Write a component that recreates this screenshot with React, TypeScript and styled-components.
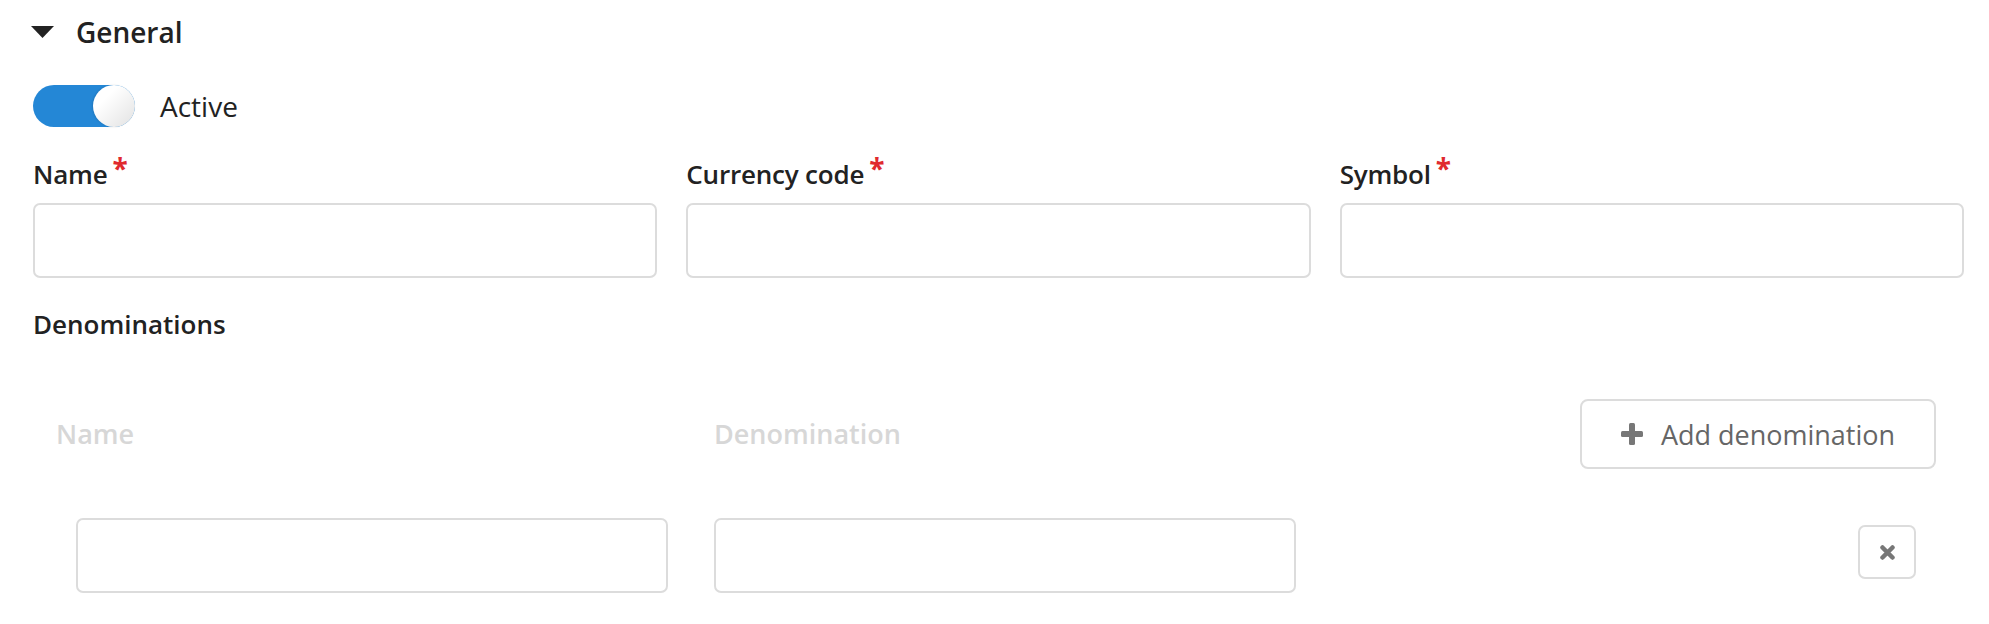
import React from "react";
import styled, { createGlobalStyle } from "styled-components";

const GlobalStyle = createGlobalStyle`
  body {
    margin: 0;
    background: #ffffff;
    font-family: "Open Sans", "Liberation Sans", sans-serif;
    color: #222222;
  }
`;

export default function App() {
  return (
    <>
      <GlobalStyle />
      <Page>
        <SectionHeader>
          <svg width="23" height="12" viewBox="0 0 23 12">
            <path d="M0 0 H23 L11.5 12 Z" fill="#222" />
          </svg>
          <span>General</span>
        </SectionHeader>

        <ToggleRow>
          <Switch $on>
            <Knob />
          </Switch>
          <span>Active</span>
        </ToggleRow>

        <FieldGrid>
          <Field>
            <Label>
              Name<Required>*</Required>
            </Label>
            <Input />
          </Field>
          <Field>
            <Label>
              Currency code<Required>*</Required>
            </Label>
            <Input />
          </Field>
          <Field>
            <Label>
              Symbol<Required>*</Required>
            </Label>
            <Input />
          </Field>
        </FieldGrid>

        <SubHeading>Denominations</SubHeading>

        <DenomTable>
          <HeadCell>Name</HeadCell>
          <HeadCell>Denomination</HeadCell>
          <AddButton>
            <svg width="22" height="22" viewBox="0 0 22 22">
              <rect x="8" y="0" width="6" height="22" rx="1.5" fill="#777" />
              <rect x="0" y="8" width="22" height="6" rx="1.5" fill="#777" />
            </svg>
            Add denomination
          </AddButton>

          <BodyCell $left={32} $right={34}>
            <Input />
          </BodyCell>
          <BodyCell $left={12} $right={14}>
            <Input />
          </BodyCell>
          <RemoveButton>
            <svg width="15" height="15" viewBox="0 0 15 15">
              <path
                d="M2.5 2.5 L12.5 12.5 M12.5 2.5 L2.5 12.5"
                stroke="#777"
                strokeWidth="4.5"
                strokeLinecap="round"
              />
            </svg>
          </RemoveButton>
        </DenomTable>
      </Page>
    </>
  );
}

const Page = styled.div`
  padding: 14px 25px 0 33px;
`;

const SectionHeader = styled.div`
  display: flex;
  align-items: center;
  gap: 22px;
  margin-left: -2px;
  font-size: 28px;
  line-height: 36px;
  font-weight: 600;
  color: #222;
`;

const ToggleRow = styled.div`
  display: flex;
  align-items: center;
  gap: 25px;
  margin-top: 35px;
  font-size: 28px;
  line-height: 36px;
  color: #222;
`;

const Switch = styled.div<{ $on?: boolean }>`
  width: 102px;
  height: 42px;
  border-radius: 21px;
  background: ${(p) => (p.$on ? "#2487d6" : "#cccccc")};
  display: flex;
  justify-content: ${(p) => (p.$on ? "flex-end" : "flex-start")};
`;

const Knob = styled.div`
  width: 42px;
  height: 42px;
  border-radius: 50%;
  background: linear-gradient(135deg, #ffffff 30%, #e2e2e2 100%);
  box-shadow: -1px 0 2px rgba(0, 0, 0, 0.12);
`;

const FieldGrid = styled.div`
  display: grid;
  grid-template-columns: repeat(3, 1fr);
  gap: 29px;
  margin-top: 24px;
`;

const Field = styled.div`
  display: flex;
  flex-direction: column;
  gap: 12px;
`;

const Label = styled.label`
  font-size: 26px;
  line-height: 34px;
  font-weight: 600;
  color: #222;
  letter-spacing: -0.2px;
`;

const Required = styled.span`
  color: #e02a2e;
  margin-left: 5px;
  font-size: 28px;
  font-weight: 700;
  vertical-align: 5px;
`;

const Input = styled.input`
  display: block;
  width: 100%;
  height: 75px;
  box-sizing: border-box;
  border: 2px solid #dcdcdc;
  border-radius: 7px;
  background: #fff;
  outline: none;
`;

const SubHeading = styled.div`
  margin-top: 29px;
  font-size: 26px;
  line-height: 34px;
  font-weight: 600;
  color: #222;
`;

const DenomTable = styled.div`
  display: grid;
  grid-template-columns: 658px 608px 1fr;
  row-gap: 49px;
  margin: 58px 28px 0 11px;
`;

const HeadCell = styled.div`
  align-self: center;
  padding-left: 12px;
  font-size: 27px;
  line-height: 36px;
  font-weight: 600;
  color: #d7d7d7;
`;

const AddButton = styled.button`
  justify-self: end;
  width: 356px;
  height: 70px;
  box-sizing: border-box;
  display: flex;
  align-items: center;
  justify-content: center;
  gap: 18px;
  border: 2px solid #dcdcdc;
  border-radius: 8px;
  background: #fff;
  font-family: "Open Sans", "Liberation Sans", sans-serif;
  font-size: 27px;
  color: #666;
`;

const BodyCell = styled.div<{ $left: number; $right: number }>`
  padding: 0 ${(p) => p.$right}px 0 ${(p) => p.$left}px;
`;

const RemoveButton = styled.button`
  justify-self: end;
  margin: 7px 20px 0 0;
  width: 58px;
  height: 54px;
  box-sizing: border-box;
  display: flex;
  align-items: center;
  justify-content: center;
  border: 2px solid #dcdcdc;
  border-radius: 7px;
  background: #fff;
  padding: 0;
`;
